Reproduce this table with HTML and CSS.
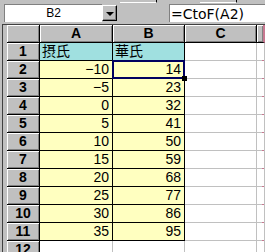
FILE: index.html
```html
<!DOCTYPE html>
<html lang="ja">
<head>
  <meta charset="UTF-8">
  <title>CtoF</title>
  <link rel="stylesheet" href="styles.css">
</head>
<body>
  <div class="toolbar-edge">
    <span class="tb-box tb-left"></span>
    <span class="tb-box tb-right"></span>
  </div>

  <div class="formula-bar">
    <div class="name-box">B2</div>
    <div class="name-drop"><span class="arrow"></span></div>
    <div class="formula-input">=CtoF(A2)</div>
  </div>

  <div class="sheet-frame">
    <div class="sheet">
      <!-- column headers -->
      <div class="cell hdr"></div>
      <div class="cell hdr">A</div>
      <div class="cell hdr">B</div>
      <div class="cell hdr">C</div>
      <div class="cell hdr hdr-break"></div>

      <div class="cell hdr">1</div>
      <div class="cell data label">摂氏</div>
      <div class="cell data label">華氏</div>
      <div class="cell"></div>
      <div class="cell edge"></div>

      <div class="cell hdr">2</div>
      <div class="cell data value">−10</div>
      <div class="cell data value active">14<span class="fill-handle"></span></div>
      <div class="cell"></div>
      <div class="cell edge"></div>

      <div class="cell hdr">3</div>
      <div class="cell data value">−5</div>
      <div class="cell data value">23</div>
      <div class="cell"></div>
      <div class="cell edge"></div>

      <div class="cell hdr">4</div>
      <div class="cell data value">0</div>
      <div class="cell data value">32</div>
      <div class="cell"></div>
      <div class="cell edge"></div>

      <div class="cell hdr">5</div>
      <div class="cell data value">5</div>
      <div class="cell data value">41</div>
      <div class="cell"></div>
      <div class="cell edge"></div>

      <div class="cell hdr">6</div>
      <div class="cell data value">10</div>
      <div class="cell data value">50</div>
      <div class="cell"></div>
      <div class="cell edge"></div>

      <div class="cell hdr">7</div>
      <div class="cell data value">15</div>
      <div class="cell data value">59</div>
      <div class="cell"></div>
      <div class="cell edge"></div>

      <div class="cell hdr">8</div>
      <div class="cell data value">20</div>
      <div class="cell data value">68</div>
      <div class="cell"></div>
      <div class="cell edge"></div>

      <div class="cell hdr">9</div>
      <div class="cell data value">25</div>
      <div class="cell data value">77</div>
      <div class="cell"></div>
      <div class="cell edge"></div>

      <div class="cell hdr">10</div>
      <div class="cell data value">30</div>
      <div class="cell data value">86</div>
      <div class="cell"></div>
      <div class="cell edge"></div>

      <div class="cell hdr">11</div>
      <div class="cell data value">35</div>
      <div class="cell data value">95</div>
      <div class="cell"></div>
      <div class="cell edge"></div>

      <div class="cell hdr">12</div>
      <div class="cell"></div>
      <div class="cell"></div>
      <div class="cell"></div>
      <div class="cell edge"></div>
    </div>
  </div>
</body>
</html>
```

FILE: styles.css
```css
body {
  margin: 0;
  width: 265px;
  height: 252px;
  overflow: hidden;
  background: #c0c0c0;
  font-family: "Liberation Sans", "Noto Sans CJK JP", sans-serif;
  font-size: 14px;
}

/* bottom of the toolbar row above */
.toolbar-edge {
  height: 4px;
  position: relative;
}

.tb-box {
  position: absolute;
  top: 0;
  height: 2px;
  border-right: 1px solid #000;
  border-bottom: 1px solid #fff;
}

.tb-left {
  left: 120px;
  width: 36px;
}

.tb-right {
  left: 200px;
  width: 36px;
}

/* name box + formula bar */
.formula-bar {
  display: flex;
  height: 18px;
  padding-left: 4px;
}

.name-box {
  width: 97px;
  background: #fff;
  border-top: 1px solid #808080;
  border-left: 1px solid #808080;
  text-align: center;
  font-size: 12px;
  line-height: 17px;
}

.name-drop {
  box-sizing: border-box;
  width: 15px;
  height: 16px;
  margin-top: 1px;
  border: 1px solid;
  border-color: #fff #000 #000 #fff;
  box-shadow: inset -1px -1px 0 #808080;
  display: flex;
  align-items: center;
  justify-content: center;
}

.arrow {
  width: 0;
  height: 0;
  border-left: 4px solid transparent;
  border-right: 4px solid transparent;
  border-top: 4px solid #000;
  margin-top: 1px;
}

.formula-input {
  flex: 1;
  margin-left: 52px;
  background: #fff;
  border-top: 1px solid #808080;
  border-left: 1px solid #808080;
  padding: 1px 0 0 1px;
  font-family: "DejaVu Sans", sans-serif;
  font-size: 14px;
  line-height: 16px;
}

/* worksheet */
.sheet-frame {
  margin: 2px 0 0 2px;
  border-top: 1px solid #404040;
  border-left: 1px solid #404040;
  padding-left: 4px;
}

.sheet {
  display: grid;
  grid-template-columns: 33px 73px 72px 72px 8px;
  grid-auto-rows: 18px;
}

.cell {
  position: relative;
  box-sizing: border-box;
  background: #fff;
  border-right: 1px solid #c0c0c0;
  border-bottom: 1px solid #c0c0c0;
  padding: 0 3px;
  line-height: 17px;
  white-space: nowrap;
}

.hdr {
  background: #c0c0c0;
  border-color: #000;
  box-shadow: inset 1px 1px 0 #fff, inset -1px -1px 0 #808080;
  font-weight: bold;
  text-align: center;
  padding: 0;
}

.hdr-break {
  border-right: 2px solid #c87890;
}

.data {
  border-color: #000;
}

.label {
  background: #a0e0e0;
  padding-left: 2px;
}

.value {
  background: #ffffc0;
  text-align: right;
}

/* page break marks on the right edge */
.edge::after {
  content: "";
  position: absolute;
  right: 0;
  bottom: -1px;
  width: 2px;
  height: 1px;
  background: #c87890;
}

/* active cell */
.active::before {
  content: "";
  position: absolute;
  left: -1px;
  top: -1px;
  width: 73px;
  height: 19px;
  box-sizing: border-box;
  border: 2px solid #000060;
}

.fill-handle {
  position: absolute;
  right: -3px;
  bottom: -3px;
  width: 5px;
  height: 5px;
  background: #000;
  z-index: 1;
}
```
